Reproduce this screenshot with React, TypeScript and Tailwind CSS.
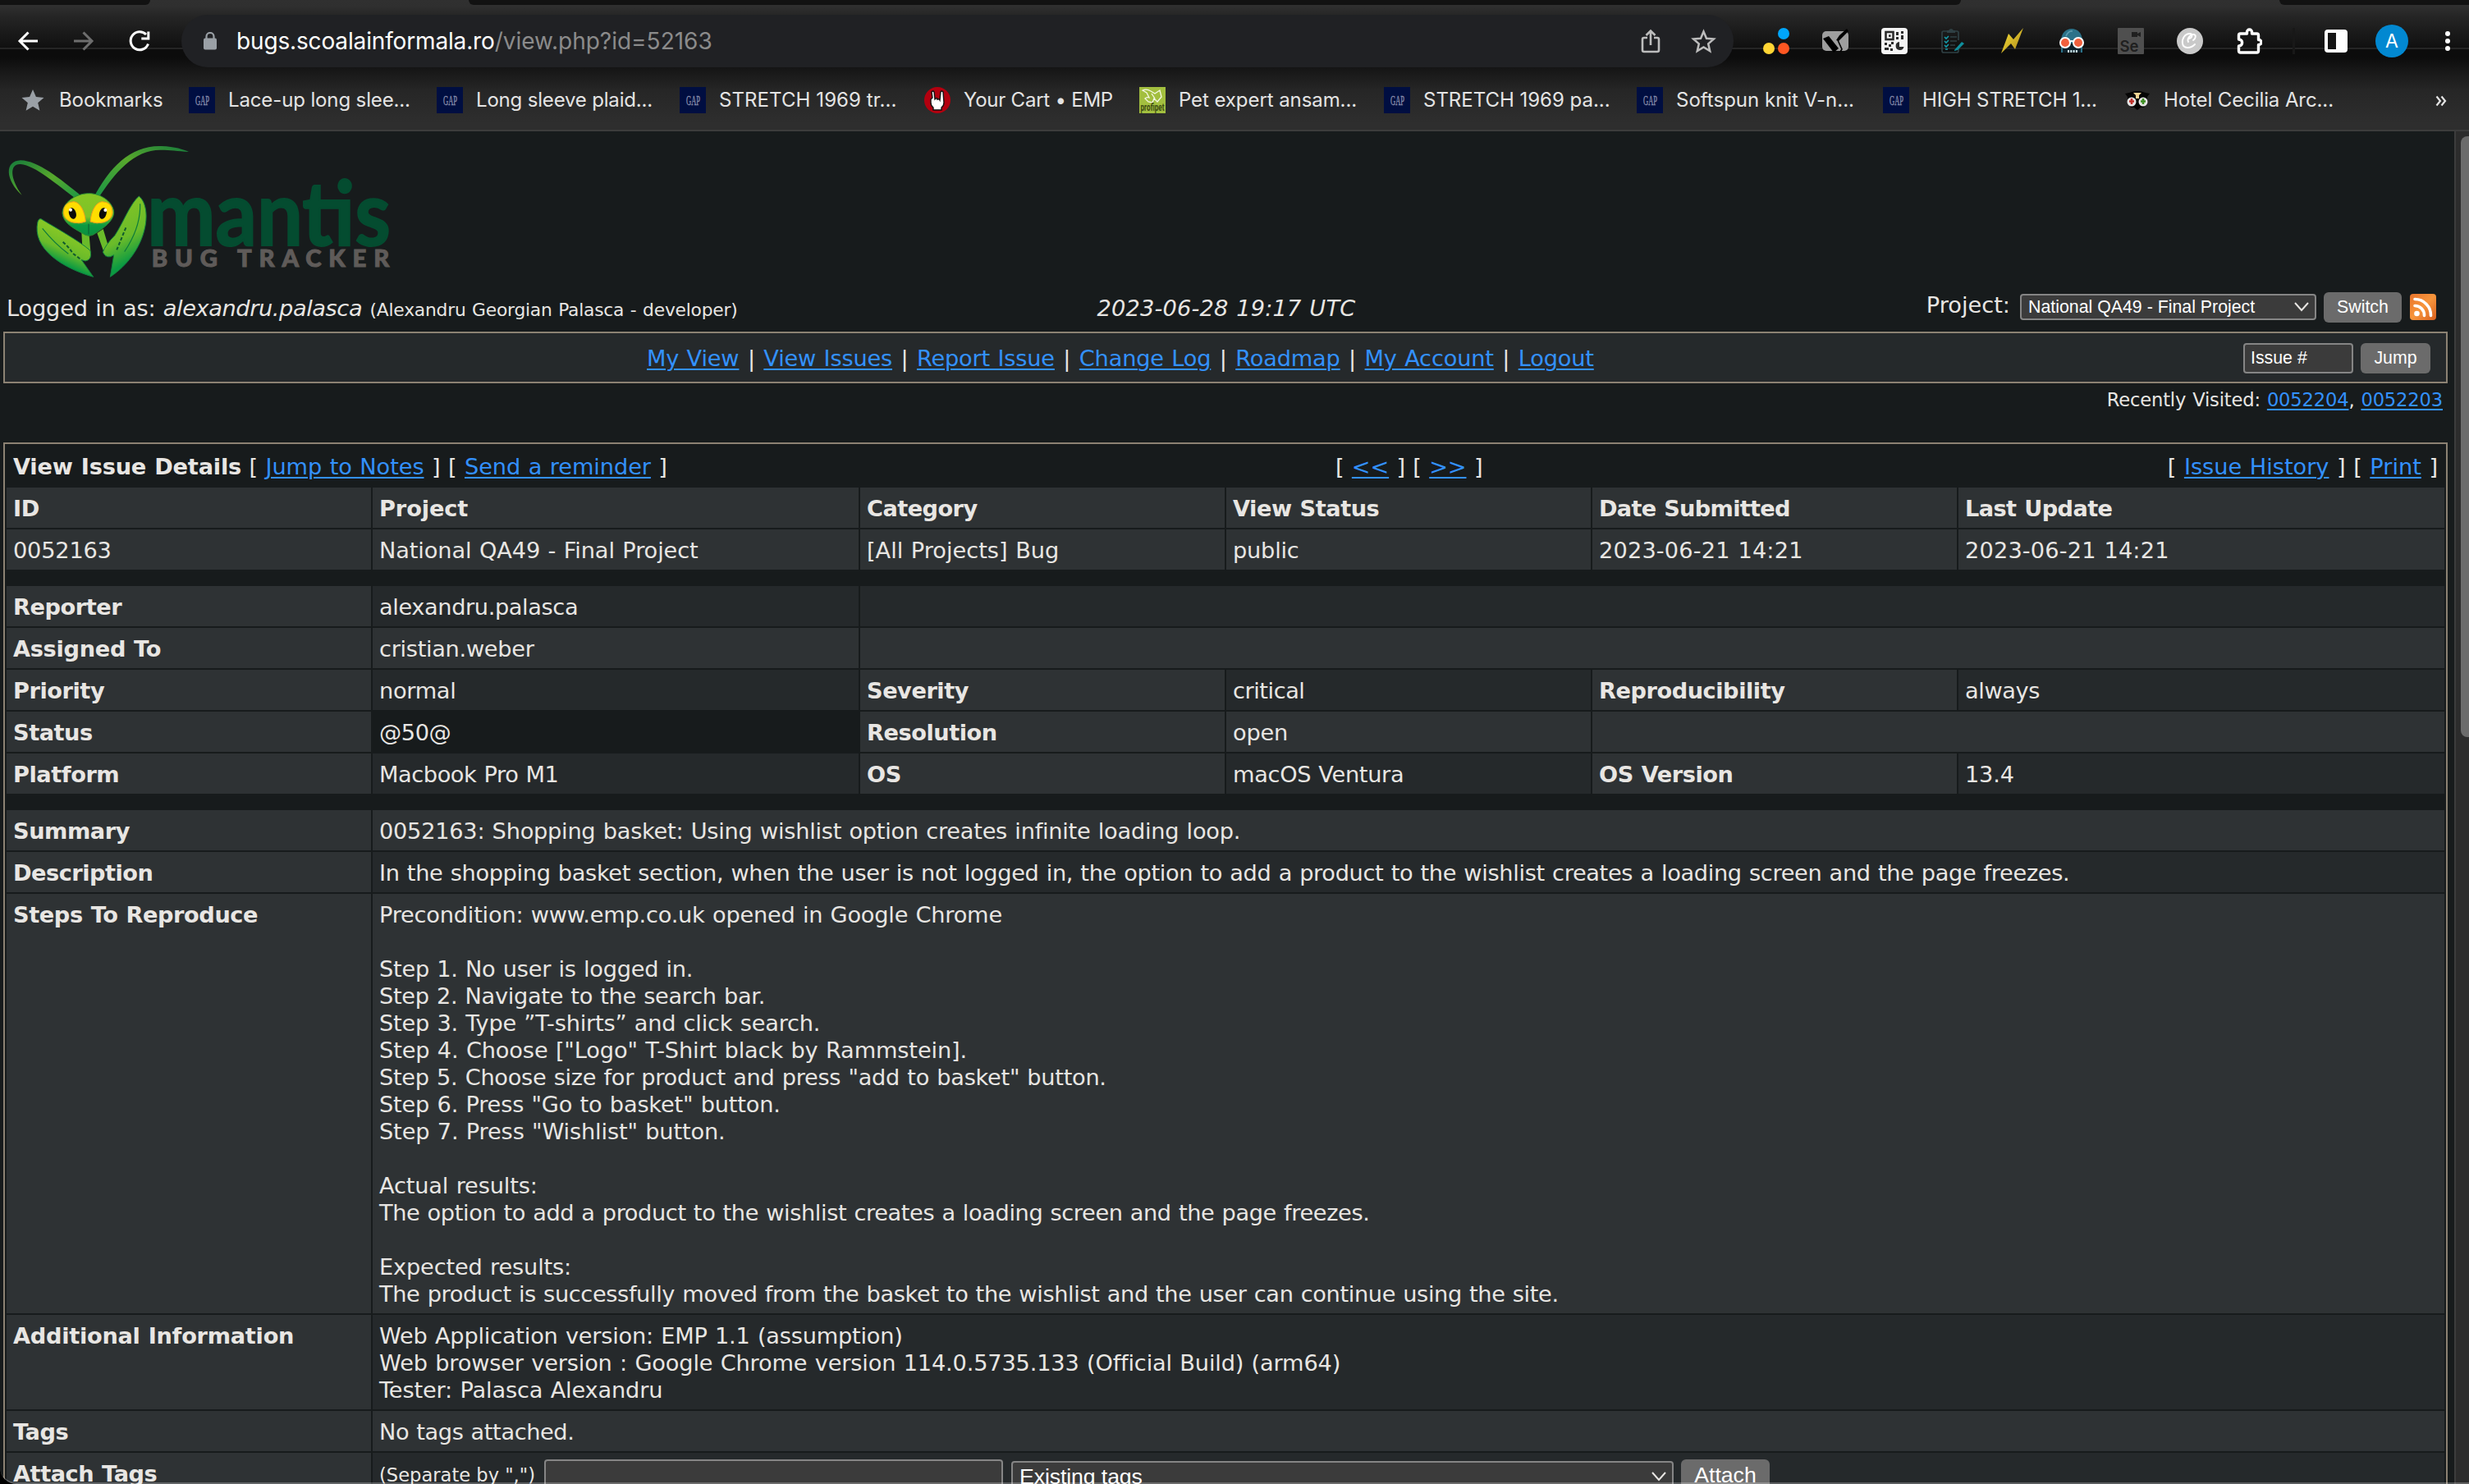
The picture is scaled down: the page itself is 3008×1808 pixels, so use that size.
import type { ReactNode } from "react";

function GapIcon() {
  return (
    <svg className="size-8 shrink-0 overflow-visible" viewBox="0 0 32 32">
      <rect width="32" height="32" fill="#000e41" />
      <text x="8" y="22" fontSize="17" fontFamily="Liberation Serif" fill="#8b90ae" stroke="#8b90ae" strokeWidth="0.4" textLength="17" lengthAdjust="spacingAndGlyphs">
        GAP
      </text>
    </svg>
  );
}

function CartIcon() {
  return (
    <svg className="size-8 shrink-0" viewBox="0 0 32 32">
      <circle cx="16" cy="16" r="16" fill="#b3000f" />
      <path
        d="M9 6q2-2 3 0l1 9 1-1q2-1 2 1 2-1 3 1l1-10q1-2 3 0l1 13q0 4-3 6v3H11v-3q-3-2-3-6v-4l2-2z"
        fill="#fff"
        stroke="#111"
        strokeWidth="1.4"
      />
    </svg>
  );
}

function PetIcon() {
  return (
    <svg className="size-8 shrink-0 overflow-visible" viewBox="0 0 32 32">
      <rect width="32" height="32" fill="#a3bf3f" />
      <path
        d="M4 4q5-2 10 1l5 3 6-4 2 8-5 6-4-4-2 5-5-1-4-4q2-2 5-1l-3-6zM15 8l4 6"
        fill="none"
        stroke="#f4f8e4"
        strokeWidth="1.3"
      />
      <text x="1.5" y="29" fontSize="12" fontWeight="700" fontFamily="Roboto" fill="#3c4a12" textLength="29" lengthAdjust="spacingAndGlyphs">
        profipet
      </text>
    </svg>
  );
}

function OwlIcon() {
  return (
    <svg className="size-8 shrink-0" viewBox="0 0 32 32">
      <path d="M1 8l5-1q10-4 20 0l5 1-3 4v8l-4 5h-4l-4 3-4-3H8l-4-5v-8z" fill="#050505" />
      <path d="M11 7h10l-3 3v4h-4v-4z" fill="#f5d595" />
      <circle cx="9" cy="18" r="5.500" fill="#e6e6e6" />
      <circle cx="23" cy="18" r="5.500" fill="#e6e6e6" />
      <path d="M9 14v7M6 17.500h6" stroke="#c0322c" strokeWidth="2.600" />
      <path d="M23 14v7M20 17.500h6" stroke="#3d8f22" strokeWidth="2.600" />
    </svg>
  );
}

const bookmarks: { icon: ReactNode; label: string; width: string; text: string }[] = [
  { icon: <GapIcon />, label: "Lace-up long slee...", width: "w-[302px]", text: "tracking-[-0.13px]" },
  { icon: <GapIcon />, label: "Long sleeve plaid...", width: "w-[296px]", text: "tracking-[-0.18px]" },
  { icon: <GapIcon />, label: "STRETCH 1969 tr...", width: "w-[298px]", text: "tracking-[0.08px]" },
  { icon: <CartIcon />, label: "Your Cart • EMP", width: "w-[262px]", text: "tracking-[-0.24px]" },
  { icon: <PetIcon />, label: "Pet expert ansam...", width: "w-[298px]", text: "tracking-[-0.08px]" },
  { icon: <GapIcon />, label: "STRETCH 1969 pa...", width: "w-[308px]", text: "tracking-[-0.02px]" },
  { icon: <GapIcon />, label: "Softspun knit V-n...", width: "w-[300px]", text: "tracking-[0px]" },
  { icon: <GapIcon />, label: "HIGH STRETCH 1...", width: "w-[294px]", text: "tracking-[-0.13px]" },
  { icon: <OwlIcon />, label: "Hotel Cecilia Arc...", width: "w-[300px]", text: "tracking-[-0.1px]" },
];

function Extensions() {
  return (
    <div className="flex items-center gap-10">
      <svg className="size-8" viewBox="0 0 32 32">
        <circle cx="25" cy="7" r="7" fill="#00a6fb" />
        <circle cx="7" cy="25" r="7" fill="#ffd534" />
        <circle cx="25" cy="25" r="7" fill="#ff5722" />
      </svg>
      <svg className="size-8" viewBox="0 0 32 32">
        <rect y="4" width="32" height="24" rx="5" fill="#9e9e9e" />
        <path d="M1 13l7-3 12 15-6 5z" fill="#000" />
        <path d="M30 1l2 3-7 7-5 5-3-1 4-6z" fill="#000" />
        <path d="M19 15l5 11-2 3" fill="none" stroke="#000" strokeWidth="1.6" />
      </svg>
      <svg className="size-8" viewBox="0 0 32 32">
        <rect width="32" height="32" rx="4" fill="#f4f4f4" />
        <rect x="5.500" y="5" width="9" height="9" fill="none" stroke="#2b2b2b" strokeWidth="2.600" />
        <rect x="9" y="8.300" width="2.600" height="2.600" fill="#2b2b2b" />
        <path d="M18 5h3v4h-3zM24 4h3v3h-3zM24 9h3v5h-3zM18 11h3v3h-3zM4 18h3v3H4zM9 20h3v3H9zM12 17h3v3h-3zM4 24h5v3H4zM11 25h3v3h-3z" fill="#2b2b2b" />
        <path d="M22 17a5 5 0 1 0 5.500 6H22z" fill="#2b2b2b" />
      </svg>
      <svg className="size-8" viewBox="0 0 32 32" fill="none">
        <path d="M9 4H4q-2 0-2 2v22q0 2 2 2h16q2 0 2-2v-3M17 4h3q2 0 2 2v9" stroke="#2f4044" strokeWidth="1.700" />
        <path d="M8 3h2q3-4 6 0h2v3H8z" fill="#2f4044" />
        <path d="M12 11h8M12 16h8M12 21h6" stroke="#2f4044" strokeWidth="1.700" />
        <path d="M5 11l2 2 3-3M5 16l2 2 3-3M5 21l2 2 3-3M6 26h3" stroke="#149aa8" strokeWidth="1.600" />
        <path d="M17 27l9-10 3 2-8 8-4 1z" fill="#0f8f9d" />
      </svg>
      <svg className="size-8" viewBox="0 0 32 32">
        <defs>
          <linearGradient id="bolt" x1="0" x2="1" y1="0" y2="1">
            <stop offset="0" stopColor="#ffe93a" />
            <stop offset="1" stopColor="#a88318" />
          </linearGradient>
        </defs>
        <path d="M29 0L19 26l-5-7L2 31 11 7l6 7z" fill="url(#bolt)" />
      </svg>
      <svg className="size-8" viewBox="0 0 32 32">
        <path d="M3 16C3-4 29-4 29 16v3H3z" fill="#2b7289" />
        <path d="M9 10q3-7 8-6" stroke="#5e9cb0" strokeWidth="1.500" fill="none" />
        <path d="M4 20h24v10H4z" fill="#10222c" />
        <path d="M4 20v10M28 20v10" stroke="#2b7289" strokeWidth="2" />
        <path d="M11 28.500h12" stroke="#cfe9ee" strokeWidth="3" strokeDasharray="2 1.300" />
        <circle cx="8" cy="18" r="6" fill="#f2603d" stroke="#fff" strokeWidth="2" />
        <circle cx="24" cy="18" r="6" fill="#f2603d" stroke="#fff" strokeWidth="2" />
        <path d="M13 17q3-2 6 0" stroke="#fff" strokeWidth="2" fill="none" />
      </svg>
      <svg className="size-8 overflow-visible" viewBox="0 0 32 32">
        <rect width="32" height="32" rx="1" fill="#4f4f4f" />
        <path d="M17 5h7v2l4-2v6l-4-2v2h-7z" fill="#202020" />
        <text x="2.500" y="29" fontSize="19" fontFamily="Inter" fontWeight="600" fill="#202020" textLength="23" lengthAdjust="spacingAndGlyphs">
          Se
        </text>
      </svg>
      <svg className="size-8" viewBox="0 0 32 32" fill="none">
        <circle cx="16" cy="16" r="16" fill="#c9c9c9" />
        <path d="M15 13c4-1 5-6 1-6-6 0-10 6-9 12s9 7 15 1M14 17c-2-4 3-10 7-9 3 1 2 5-1 7" stroke="#fff" strokeWidth="1.900" strokeLinecap="round" />
      </svg>
      <svg className="size-8" viewBox="0 0 32 32" fill="none">
        <path
          d="M3.500 9q0-2 2-2h8V5a3 3 0 0 1 6 0V7h6q2 0 2 2v5.500h.5a3 3 0 0 1 0 6h-.5V28q0 2-2 2h-20q-2 0-2-2v-6c5.500 0 5.500-8 0-8z"
          stroke="#fff"
          strokeWidth="3.400"
          strokeLinejoin="round"
        />
      </svg>
    </div>
  );
}

function BrowserChrome() {
  return (
    <header className="flex h-40 shrink-0 flex-col border-b-2 border-[#3c3c3c] bg-[linear-gradient(to_bottom,#303030_0px,#2f2f2f_8px,#252525_20px,#101010_58px,#252525_58px,#252525_60px,#0c0c0c_60px,#0c0c0c_70px,#161616_84px,#262626_110px,#2e2e2e_150px)] font-['Inter',sans-serif]">
      <div className="flex h-1.5 justify-between">
        <div className="w-[183px] rounded-br-lg bg-[#121212]" />
        <div className="w-[1818px] rounded-b-lg bg-[#121212]" />
        <div className="w-[231px] rounded-bl-lg bg-[#121212]" />
      </div>
      <div className="flex h-[88px] items-center">
        <svg className="ml-[18px] size-8" viewBox="0 0 32 32" fill="none" stroke="#fff" strokeWidth="3">
          <path d="M28 16H6M16.500 5.500L6 16l10.500 10.500" />
        </svg>
        <svg className="ml-9 size-8" viewBox="0 0 32 32" fill="none" stroke="#6e6e6e" strokeWidth="3">
          <path d="M4 16h22M15.500 5.500L26 16 15.500 26.500" />
        </svg>
        <svg className="ml-9 size-8" viewBox="0 0 32 32" fill="none" stroke="#fff" strokeWidth="3">
          <path d="M26.500 19.500a11 11 0 1 1-2.500-11.500M26.800 4.500V13h-8.500" />
        </svg>
        <div className="ml-[35px] flex h-16 w-[1891px] items-center rounded-full bg-[#202124]">
          <svg className="ml-[26px] h-[22px] w-[18px]" viewBox="0 0 18 22">
            <path d="M4.500 8V5.500a4.500 4.500 0 0 1 9 0V8" fill="none" stroke="#9aa0a6" strokeWidth="2.200" />
            <rect x="1" y="7.500" width="16" height="14" rx="2" fill="#9aa0a6" />
          </svg>
          <div className="ml-[23px] text-[28px] leading-8 tracking-[-0.15px] text-white">
            bugs.scoalainformala.ro<span className="tracking-[0px] text-[#8b8b8b]">/view.php?id=52163</span>
          </div>
          <svg className="ml-auto h-[30px] w-[24px]" viewBox="0 0 24 30" fill="none" stroke="#bdbdbd" strokeWidth="2.600">
            <path d="M8 11H4q-2 0-2 2v13q0 2 2 2h16q2 0 2-2V13q0-2-2-2h-4M12 20V3M6.500 8L12 2.500 17.500 8" />
          </svg>
          <svg className="mr-[21px] ml-[37px] size-[31px]" viewBox="0 0 31 31" fill="none" stroke="#bdbdbd" strokeWidth="2.500">
            <path d="M15.500 3.500l3.500 8.200 8.900.8-6.700 5.900 2 8.700-7.700-4.600-7.700 4.600 2-8.700-6.700-5.900 8.900-.8z" />
          </svg>
        </div>
        <div className="ml-9">
          <Extensions />
        </div>
        <div className="ml-[37px] h-8 w-[3px] bg-[#181818]" />
        <svg className="ml-9 h-7 w-7" viewBox="0 0 28 28">
          <rect width="28" height="28" rx="4" fill="#fff" />
          <rect x="4" y="4" width="10" height="20" fill="#141414" />
        </svg>
        <div className="ml-[34px] flex size-10 items-center justify-center rounded-full bg-[#0288d1] text-[23px] text-white">A</div>
        <div className="ml-[45px] flex flex-col gap-[3px]">
          <div className="size-1.5 rounded-full bg-white" />
          <div className="size-1.5 rounded-full bg-white" />
          <div className="size-1.5 rounded-full bg-white" />
        </div>
      </div>
      <div className="flex h-14 items-center text-2xl whitespace-pre text-[#e4e4e4]">
        <svg className="ml-[26px] size-7" viewBox="0 0 28 28">
          <path d="M14 1l3.900 9 9.600.9-7.300 6.400 2.200 9.500L14 21.700l-8.400 5.100 2.200-9.500L.5 10.900l9.600-.9z" fill="#9aa0a6" />
        </svg>
        <div className="w-[176px] pl-[18px] tracking-[-0.1px]">Bookmarks</div>
        {bookmarks.map((b) => (
          <div key={b.label} className={`flex shrink-0 items-center gap-4 ${b.width}`}>
            {b.icon}
            <span className={b.text}>{b.label}</span>
          </div>
        ))}
        <svg className="mt-px ml-[79px] h-3.5 w-3.5" viewBox="0 0 14 14" fill="none" stroke="#e4e4e4" strokeWidth="2.200">
          <path d="M1.500 1.500L6 7l-4.500 5.500M7.500 1.500L12 7l-4.500 5.500" />
        </svg>
      </div>
    </header>
  );
}

function MantisLogo() {
  return (
    <svg className="ml-2.5 h-40 w-[464px] overflow-visible" viewBox="30 54 1392 480">
      <defs>
        <linearGradient id="antL" x1="0" x2="1" y1="0" y2="1">
          <stop offset="0" stopColor="#157a3c" />
          <stop offset="0.500" stopColor="#58a82c" />
          <stop offset="1" stopColor="#159447" />
        </linearGradient>
        <linearGradient id="antR" x1="0" x2="1" y1="1" y2="0">
          <stop offset="0" stopColor="#159447" />
          <stop offset="0.550" stopColor="#58a82c" />
          <stop offset="1" stopColor="#157a3c" />
        </linearGradient>
        <linearGradient id="head" x1="0" x2="0" y1="0" y2="1">
          <stop offset="0" stopColor="#86c625" />
          <stop offset="0.550" stopColor="#7cc327" />
          <stop offset="0.750" stopColor="#0b9a42" />
          <stop offset="1" stopColor="#0b8f3f" />
        </linearGradient>
        <linearGradient id="clawL" x1="0.600" x2="0.300" y1="0.300" y2="1">
          <stop offset="0" stopColor="#84c626" />
          <stop offset="0.350" stopColor="#6abb2a" />
          <stop offset="0.650" stopColor="#0b9a42" />
        </linearGradient>
        <linearGradient id="clawR" x1="0.400" x2="0.700" y1="0" y2="1">
          <stop offset="0" stopColor="#86c625" />
          <stop offset="0.500" stopColor="#6abb2a" />
          <stop offset="0.800" stopColor="#0b9a42" />
        </linearGradient>
      </defs>
      <path d="M290 255C200 190 130 125 75 120C35 118 35 170 80 233C20 180 15 108 75 106C140 108 215 170 302 240z" fill="url(#antL)" />
      <path d="M341 245C400 130 480 50 590 54C640 56 670 66 690 75C650 72 620 68 590 68C490 66 420 150 357 248z" fill="url(#antR)" />
      <path d="M298 368l28 12 6 70-30-5zM355 372l22-15 18 60 10 35-20 5z" fill="#6abb2a" />
      <path d="M150 320C190 345 290 400 330 436Q338 470 312 474L298 470 341 532C230 500 115 430 138 330Q142 318 150 320z" fill="url(#clawL)" stroke="#11803f" strokeWidth="3" />
      <path d="M155 355Q200 410 250 448" fill="none" stroke="#0c7a3a" strokeWidth="3.500" />
      <path d="M230 404q22 20 36 42l32 24" fill="none" stroke="#0f5a2e" strokeWidth="6" strokeDasharray="12 7" />
      <path d="M508 237C560 280 540 440 403 532L416 452Q390 470 376 442 385 415 420 380C450 335 475 265 508 237z" fill="url(#clawR)" stroke="#11803f" strokeWidth="3" />
      <path d="M512 265Q515 350 455 440" fill="none" stroke="#0c7a3a" strokeWidth="3.500" />
      <path d="M460 352L424 440" fill="none" stroke="#0f5a2e" strokeWidth="6" strokeDasharray="12 7" />
      <path d="M322 227C370 225 418 262 416 300C412 330 380 352 350 372Q326 392 300 372C265 352 232 335 228 300C228 262 275 228 322 227z" fill="url(#head)" stroke="#2b8a33" strokeWidth="3" />
      <path d="M232 297Q232 258 270 257C295 260 310 295 313 330Q290 340 262 332 234 322 232 297z" fill="#ffdd00" stroke="#f0a01c" strokeWidth="3" />
      <path d="M411 297Q411 258 373 257C348 260 333 295 330 330Q353 340 381 332 409 322 411 297z" fill="#ffdd00" stroke="#f0a01c" strokeWidth="3" />
      <ellipse cx="265" cy="300" rx="13" ry="21" fill="#0a0a0a" transform="rotate(-15 265 300)" />
      <ellipse cx="376" cy="300" rx="13" ry="21" fill="#0a0a0a" transform="rotate(15 376 300)" />
      <circle cx="258" cy="287" r="6" fill="#fff" />
      <circle cx="385" cy="288" r="6" fill="#fff" />
      <path d="M324 338v38" stroke="#0c6a35" strokeWidth="4" />
      <text x="538" y="418" fontFamily="Lato" fontWeight="700" fontSize="326" fill="#044c30" stroke="#044c30" strokeWidth="6" textLength="890" lengthAdjust="spacingAndGlyphs">
        mantis
      </text>
      <text x="554" y="494" fontFamily="Lato" fontWeight="900" fontSize="88" fill="#5f5b59" stroke="#5f5b59" strokeWidth="3" textLength="869">
        BUG TRACKER
      </text>
    </svg>
  );
}

function A({ children }: { children: ReactNode }) {
  return <a className="text-[#3391ff] underline decoration-2 underline-offset-[3px]">{children}</a>;
}

function Chevron({ className }: { className: string }) {
  return (
    <svg className={className} viewBox="0 0 18 12" fill="none" stroke="#e8e6e3" strokeWidth="2">
      <path d="M1 1l8 9 8-9" />
    </svg>
  );
}

function PageHeader() {
  const nav = ["My View", "View Issues", "Report Issue", "Change Log", "Roadmap", "My Account", "Logout"];
  return (
    <>
      <div className="grid h-[66px] grid-cols-3 whitespace-pre">
        <div className="pt-[21px] pl-2 tracking-[-0.17px]">
          Logged in as: <i className="tracking-[-0.4px]">alexandru.palasca</i>{" "}
          <span className="text-[21.76px] tracking-[-0.2px]">(Alexandru Georgian Palasca - developer)</span>
        </div>
        <div className="pt-[21px] pr-[2px] text-center tracking-[0.2px] italic">2023-06-28 19:17 UTC</div>
        <div className="flex items-start justify-end pr-[22px]">
          <span className="mt-[17px] mr-3">Project:</span>
          <div className="mt-5 mr-[9px] flex h-8 w-[361px] items-center justify-between rounded border-2 border-[#858585] bg-[#3b3b3b] pr-[7px] pl-2 font-['Liberation_Sans',sans-serif] text-[21.33px] leading-6 text-white [word-spacing:0px]">
            National QA49 - Final Project
            <Chevron className="h-3 w-[18px]" />
          </div>
          <div className="mt-[18px] mr-2.5 flex h-[37px] w-[95px] items-center justify-center rounded-md bg-[#6b6b6b] pb-0.5 font-['Liberation_Sans',sans-serif] text-[21.33px] leading-6 text-white">
            Switch
          </div>
          <svg className="mt-5 size-8" viewBox="0 0 32 32">
            <defs>
              <linearGradient id="rss" x1="0" x2="1" y1="0" y2="1">
                <stop offset="0" stopColor="#e8742c" />
                <stop offset="0.500" stopColor="#f7953c" />
                <stop offset="1" stopColor="#d8601f" />
              </linearGradient>
            </defs>
            <rect width="32" height="32" rx="4" fill="url(#rss)" />
            <circle cx="8.500" cy="24" r="3.300" fill="#fff" />
            <path d="M6 14.500A11.500 11.500 0 0 1 17.500 26.500M6 6.500A19.500 19.500 0 0 1 25.500 26.500" fill="none" stroke="#fff" strokeWidth="3.600" strokeLinecap="round" />
          </svg>
        </div>
      </div>
      <nav className="ml-1 flex h-[63px] w-[2978px] justify-between border-2 border-[#8c8273] bg-[#25292b]">
        <div className="pt-3.5 pl-[782px] tracking-[-0.17px] whitespace-pre">
          {nav.map((n, i) => (
            <span key={n}>
              {i > 0 && <span className="px-[1.1px]"> | </span>}
              <A>{n}</A>
            </span>
          ))}
        </div>
        <div className="flex gap-[9px] pt-3 pr-[19px] font-['Liberation_Sans',sans-serif] text-[21.33px] leading-6 text-white [word-spacing:0px]">
          <div className="flex h-[37px] w-[134px] items-center rounded border-2 border-[#858585] bg-[#3b3b3b] pb-0.5 pl-[7px]">Issue #</div>
          <div className="flex h-[37px] w-[85px] items-center justify-center rounded-md bg-[#6b6b6b] pb-0.5">Jump</div>
        </div>
      </nav>
      <div className="h-[72px] pt-1.5 pr-3.5 text-right text-[22.6px] leading-7 tracking-[-0.15px]">
        Recently Visited: <A>0052204</A>, <A>0052203</A>
      </div>
    </>
  );
}

const row = "grid grid-cols-[444px_592px_444px_444px_444px_592px] gap-0.5";

function H({ children, t = "tracking-[-0.45px]" }: { children: ReactNode; t?: string }) {
  return <div className={`min-h-[49px] bg-[#2e3234] px-2 pt-[9px] pb-[7px] font-bold ${t}`}>{children}</div>;
}

function C({ children, bg = "bg-[#25292b]", span = "", t = "tracking-[-0.2px]" }: { children?: ReactNode; bg?: string; span?: string; t?: string }) {
  return <div className={`min-h-[49px] px-2 pt-[9px] pb-[7px] whitespace-pre ${bg} ${span} ${t}`}>{children}</div>;
}

const light = "bg-[#2e3234]";

const steps: [string, string][] = [
  ["Precondition: www.emp.co.uk opened in Google Chrome", "tracking-[-0.21px]"],
  ["", ""],
  ["Step 1. No user is logged in.", "tracking-[-0.24px]"],
  ["Step 2. Navigate to the search bar.", "tracking-[-0.3px]"],
  ["Step 3. Type ”T-shirts” and click search.", "tracking-[-0.2px]"],
  ["Step 4. Choose [\"Logo\" T-Shirt black by Rammstein].", "tracking-[-0.13px]"],
  ["Step 5. Choose size for product and press \"add to basket\" button.", "tracking-[-0.28px]"],
  ["Step 6. Press \"Go to basket\" button.", "tracking-[-0.18px]"],
  ["Step 7. Press \"Wishlist\" button.", "tracking-[-0.14px]"],
  ["", ""],
  ["Actual results:", "tracking-[-0.15px]"],
  ["The option to add a product to the wishlist creates a loading screen and the page freezes.", "tracking-[-0.38px]"],
  ["", ""],
  ["Expected results:", "tracking-[-0.15px]"],
  ["The product is successfully moved from the basket to the wishlist and the user can continue using the site.", "tracking-[-0.36px]"],
];

const info: [string, string][] = [
  ["Web Application version: EMP 1.1 (assumption)", "tracking-[-0.21px]"],
  ["Web browser version : Google Chrome version 114.0.5735.133 (Official Build) (arm64)", "tracking-[-0.16px]"],
  ["Tester: Palasca Alexandru", "tracking-[-0.15px]"],
];

function Lines({ lines }: { lines: [string, string][] }) {
  return (
    <>
      {lines.map(([text, t], i) => (
        <div key={i} className={`h-[33px] ${t}`}>
          {text}
        </div>
      ))}
    </>
  );
}

function IssueTable() {
  return (
    <div className="ml-1 flex w-[2978px] flex-col gap-0.5 border-2 border-[#8c8273] p-0.5">
      <div className="flex h-[49px] justify-between px-2 pt-[9px] whitespace-pre">
        <div className="w-[1611px] tracking-[-0.07px]">
          <b className="tracking-[-0.2px]">View Issue Details</b> [ <A>Jump to Notes</A> ] [ <A>Send a reminder</A> ]
        </div>
        <div className="flex-1 tracking-[-0.15px]">
          [ <A>&lt;&lt;</A> ] [ <A>&gt;&gt;</A> ]
        </div>
        <div className="tracking-[0px]">
          [ <A>Issue History</A> ] [ <A>Print</A> ]
        </div>
      </div>
      <div className={row}>
        <H>ID</H>
        <H t="tracking-[-0.1px]">Project</H>
        <H t="tracking-[-0.55px]">Category</H>
        <H>View Status</H>
        <H t="tracking-[-0.7px]">Date Submitted</H>
        <H t="tracking-[-0.6px]">Last Update</H>
      </div>
      <div className={row}>
        <C bg={light}>0052163</C>
        <C bg={light} t="tracking-[-0.1px]">National QA49 - Final Project</C>
        <C bg={light} t="tracking-[0px]">[All Projects] Bug</C>
        <C bg={light}>public</C>
        <C bg={light} t="tracking-[0.17px]">2023-06-21 14:21</C>
        <C bg={light} t="tracking-[0.17px]">2023-06-21 14:21</C>
      </div>
      <div className="h-4" />
      <div className={row}>
        <H>Reporter</H>
        <C t="tracking-[-0.38px]">alexandru.palasca</C>
        <C span="col-span-4" />
      </div>
      <div className={row}>
        <H t="tracking-[-0.3px]">Assigned To</H>
        <C bg={light} t="tracking-[-0.3px]">cristian.weber</C>
        <C bg={light} span="col-span-4" />
      </div>
      <div className={row}>
        <H>Priority</H>
        <C t="tracking-[-0.3px]">normal</C>
        <H>Severity</H>
        <C t="tracking-[-0.45px]">critical</C>
        <H>Reproducibility</H>
        <C t="tracking-[-0.4px]">always</C>
      </div>
      <div className={row}>
        <H>Status</H>
        <C bg="bg-[#171b1c]" t="tracking-[-0.4px]">@50@</C>
        <H>Resolution</H>
        <C bg={light}>open</C>
        <C bg={light} span="col-span-2" />
      </div>
      <div className={row}>
        <H>Platform</H>
        <C t="tracking-[-0.42px]">Macbook Pro M1</C>
        <H>OS</H>
        <C t="tracking-[-0.32px]">macOS Ventura</C>
        <H>OS Version</H>
        <C>13.4</C>
      </div>
      <div className="h-4" />
      <div className={row}>
        <H>Summary</H>
        <C bg={light} span="col-span-5" t="tracking-[-0.24px]">
          0052163: Shopping basket: Using wishlist option creates infinite loading loop.
        </C>
      </div>
      <div className={row}>
        <H t="tracking-[-0.5px]">Description</H>
        <C span="col-span-5" t="tracking-[-0.33px]">
          In the shopping basket section, when the user is not logged in, the option to add a product to the wishlist creates a loading screen and the page freezes.
        </C>
      </div>
      <div className={row}>
        <H t="tracking-[-0.4px]">Steps To Reproduce</H>
        <C bg={light} span="col-span-5">
          <Lines lines={steps} />
        </C>
      </div>
      <div className={row}>
        <H t="tracking-[-0.27px]">Additional Information</H>
        <C span="col-span-5">
          <Lines lines={info} />
        </C>
      </div>
      <div className={row}>
        <H>Tags</H>
        <C bg={light} span="col-span-5" t="tracking-[-0.4px]">
          No tags attached.
        </C>
      </div>
      <div className={row}>
        <H>Attach Tags</H>
        <div className="col-span-5 flex h-[60px] items-start bg-[#25292b] pt-2 pl-2 text-[26.67px] text-white [word-spacing:0px]">
          <span className="w-[201px] pt-[3px] text-[22.6px] text-[#e8e6e3]">(Separate by ",")</span>
          <div className="h-[43px] w-[559px] rounded border-2 border-[#858585] bg-[#3b3b3b]" />
          <div className="mt-0.5 ml-2.5 flex h-[38px] w-[807px] items-center justify-between rounded border-2 border-[#858585] bg-[#3b3b3b] pr-[7px] pl-[8px] font-['Liberation_Sans',sans-serif] tracking-[-0.1px]">
            Existing tags
            <Chevron className="h-3 w-[18px]" />
          </div>
          <div className="ml-[9px] flex h-[43px] w-[108px] justify-center rounded-md bg-[#6b6b6b] pt-[3px] font-['Liberation_Sans',sans-serif]">
            Attach
          </div>
        </div>
      </div>
    </div>
  );
}

export default function App() {
  return (
    <div className="h-[1808px] w-[3008px] bg-black">
      <div className="relative flex h-full flex-col overflow-hidden rounded-bl-[20px] bg-[#171b1c]">
        <BrowserChrome />
        <div className="flex h-[1648px] overflow-hidden">
          <main className="w-[2990px] pt-[18px] font-['DejaVu_Sans',sans-serif] text-[27.2px] leading-[33px] text-[#e8e6e3] [word-spacing:0.9px]">
            <MantisLogo />
            <PageHeader />
            <IssueTable />
          </main>
          <div className="flex h-full w-[18px] justify-end border-l-2 border-[#3c3c3c] bg-[#2c2c2c] pt-1.5">
            <div className="h-[732px] w-2.5 rounded-l-lg bg-[#6b6b6b]" />
          </div>
        </div>
        <div className="pointer-events-none absolute inset-0 rounded-bl-[20px] border-b-2 border-white/25" />
      </div>
    </div>
  );
}
